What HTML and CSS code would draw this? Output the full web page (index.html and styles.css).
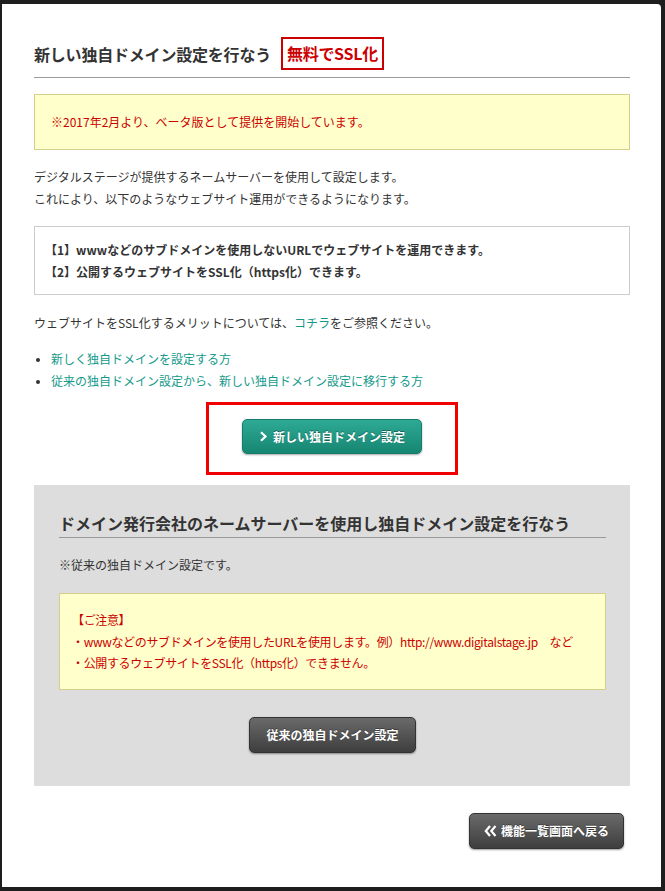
FILE: index.html
```html
<!DOCTYPE html>
<html lang="ja">
<head>
<meta charset="utf-8">
<title>独自ドメイン設定</title>
<link rel="stylesheet" href="styles.css">
</head>
<body>
<div class="modal">
  <div class="head">
    <h1 class="head-title">新しい独自ドメイン設定を行なう</h1>
    <span class="badge">無料でSSL化</span>
  </div>

  <div class="notice">※2017年2月より、ベータ版として提供を開始しています。</div>

  <p class="para">デジタルステージが提供するネームサーバーを使用して設定します。<br>これにより、以下のようなウェブサイト運用ができるようになります。</p>

  <div class="features">
    <p>【1】wwwなどのサブドメインを使用しないURLでウェブサイトを運用できます。</p>
    <p>【2】公開するウェブサイトをSSL化（https化）できます。</p>
  </div>

  <p class="para merit">ウェブサイトをSSL化するメリットについては、<a class="link" href="#">コチラ</a>をご参照ください。</p>

  <ul class="links">
    <li><a class="link" href="#">新しく独自ドメインを設定する方</a></li>
    <li><a class="link" href="#">従来の独自ドメイン設定から、新しい独自ドメイン設定に移行する方</a></li>
  </ul>

  <div class="highlight-wrap">
    <div class="highlight">
      <a class="btn btn-teal" href="#">
        <svg class="chev" width="9" height="11" viewBox="0 0 9 11"><path d="M2 1.2 L6.5 5.5 L2 9.8" fill="none" stroke="#fff" stroke-width="2.2"/></svg>
        新しい独自ドメイン設定
      </a>
    </div>
  </div>

  <div class="legacy">
    <h2 class="legacy-title">ドメイン発行会社のネームサーバーを使用し独自ドメイン設定を行なう</h2>
    <p class="legacy-note">※従来の独自ドメイン設定です。</p>
    <div class="caution">
      <p>【ご注意】</p>
      <p>・wwwなどのサブドメインを使用したURLを使用します。例）http://www.digitalstage.jp　など</p>
      <p>・公開するウェブサイトをSSL化（https化）できません。</p>
    </div>
    <div class="center">
      <a class="btn btn-dark btn-legacy" href="#">従来の独自ドメイン設定</a>
    </div>
  </div>

  <div class="foot">
    <a class="btn btn-dark btn-back" href="#">
      <svg class="chev2" width="13" height="12" viewBox="0 0 13 12"><path d="M6 1 L1.8 6 L6 11 M11.5 1 L7.3 6 L11.5 11" fill="none" stroke="#fff" stroke-width="2.2"/></svg>
      機能一覧画面へ戻る
    </a>
  </div>
</div>
</body>
</html>
```

FILE: styles.css
```css
* { box-sizing: border-box; }

html, body {
  margin: 0;
  padding: 0;
}

body {
  background: #1e1e1e;
  font-family: "Noto Sans CJK JP", "Noto Sans", sans-serif;
  font-size: 12px;
  color: #333;
  padding: 4px 4px 4px 2px;
  width: 665px;
  height: 891px;
  overflow: hidden;
}

.modal {
  background: #fff;
  width: 659px;
  height: 883px;
  border-radius: 0 4px 0 0;
  padding: 33px 31px 0 32px;
}

.head {
  display: flex;
  align-items: center;
  gap: 10px;
  padding-bottom: 7px;
  border-bottom: 1px solid #9a9a9a;
}

.head-title {
  margin: 0;
  font-size: 16px;
  font-weight: bold;
  color: #333;
  letter-spacing: -0.2px;
}

.badge {
  display: inline-block;
  border: 2px solid #cc0000;
  color: #cc0000;
  font-size: 16px;
  font-weight: bold;
  height: 33px;
  line-height: 29px;
  padding: 0 4px;
  letter-spacing: -0.3px;
}

.notice {
  margin-top: 16px;
  background: #ffffcc;
  border: 1px solid #d3cf8c;
  color: #cc0000;
  padding: 16px 16px 17px;
  line-height: 21px;
}

.para {
  margin: 16px 0 0;
  line-height: 22px;
}

.features {
  margin-top: 16px;
  border: 1px solid #cccccc;
  padding: 12px 16px 12px 10px;
  font-weight: bold;
  line-height: 21.5px;
}

.features p { margin: 0; }

.merit { margin-top: 17px; }

.link {
  color: #14998a;
  text-decoration: none;
}

.links {
  margin: 14px 0 0;
  padding: 0 0 0 17px;
  line-height: 22px;
}

.links li::marker { color: #333; font-size: 10px; }

.highlight-wrap {
  display: flex;
  justify-content: center;
  margin-top: 10px;
}

.highlight {
  width: 252px;
  height: 73px;
  border: 3px solid #f00000;
  display: flex;
  justify-content: center;
  padding-top: 14px;
}

.btn {
  display: inline-flex;
  align-items: center;
  justify-content: center;
  gap: 5px;
  color: #fff;
  font-weight: bold;
  font-size: 12px;
  text-decoration: none;
  border-radius: 5px;
  text-shadow: 0 -1px 0 rgba(0,0,0,0.35);
}

.btn-teal {
  width: 180px;
  height: 35px;
  background: linear-gradient(#2eaa95, #168672);
  border: 1px solid #157d6b;
  box-shadow: 0 1px 2px rgba(0,0,0,0.35);
}

.legacy {
  margin-top: 10px;
  background: #dddddd;
  padding: 26px 24px 33px 25px;
}

.legacy-title {
  margin: 0;
  font-size: 16px;
  font-weight: bold;
  line-height: 24px;
  padding-bottom: 2px;
  border-bottom: 1px solid #999;
  color: #333;
}

.legacy-note {
  margin: 16px 0 0;
  line-height: 22px;
}

.caution {
  margin-top: 17px;
  background: #ffffcc;
  border: 1px solid #d3cf8c;
  color: #cc0000;
  padding: 15px 6px 15px 12px;
  line-height: 21.5px;
  letter-spacing: -0.35px;
  white-space: nowrap;
}

.caution p { margin: 0; }

.center {
  display: flex;
  justify-content: center;
  margin-top: 27px;
}

.btn-dark {
  background: linear-gradient(#6a6a6a, #3e3e3e);
  border: 1px solid #333;
  box-shadow: 0 1px 2px rgba(0,0,0,0.4);
}

.btn-legacy {
  width: 167px;
  height: 36px;
}

.foot {
  display: flex;
  justify-content: flex-end;
  margin-top: 27px;
  padding-right: 6px;
}

.btn-back {
  width: 155px;
  height: 36px;
  gap: 4px;
}
```
